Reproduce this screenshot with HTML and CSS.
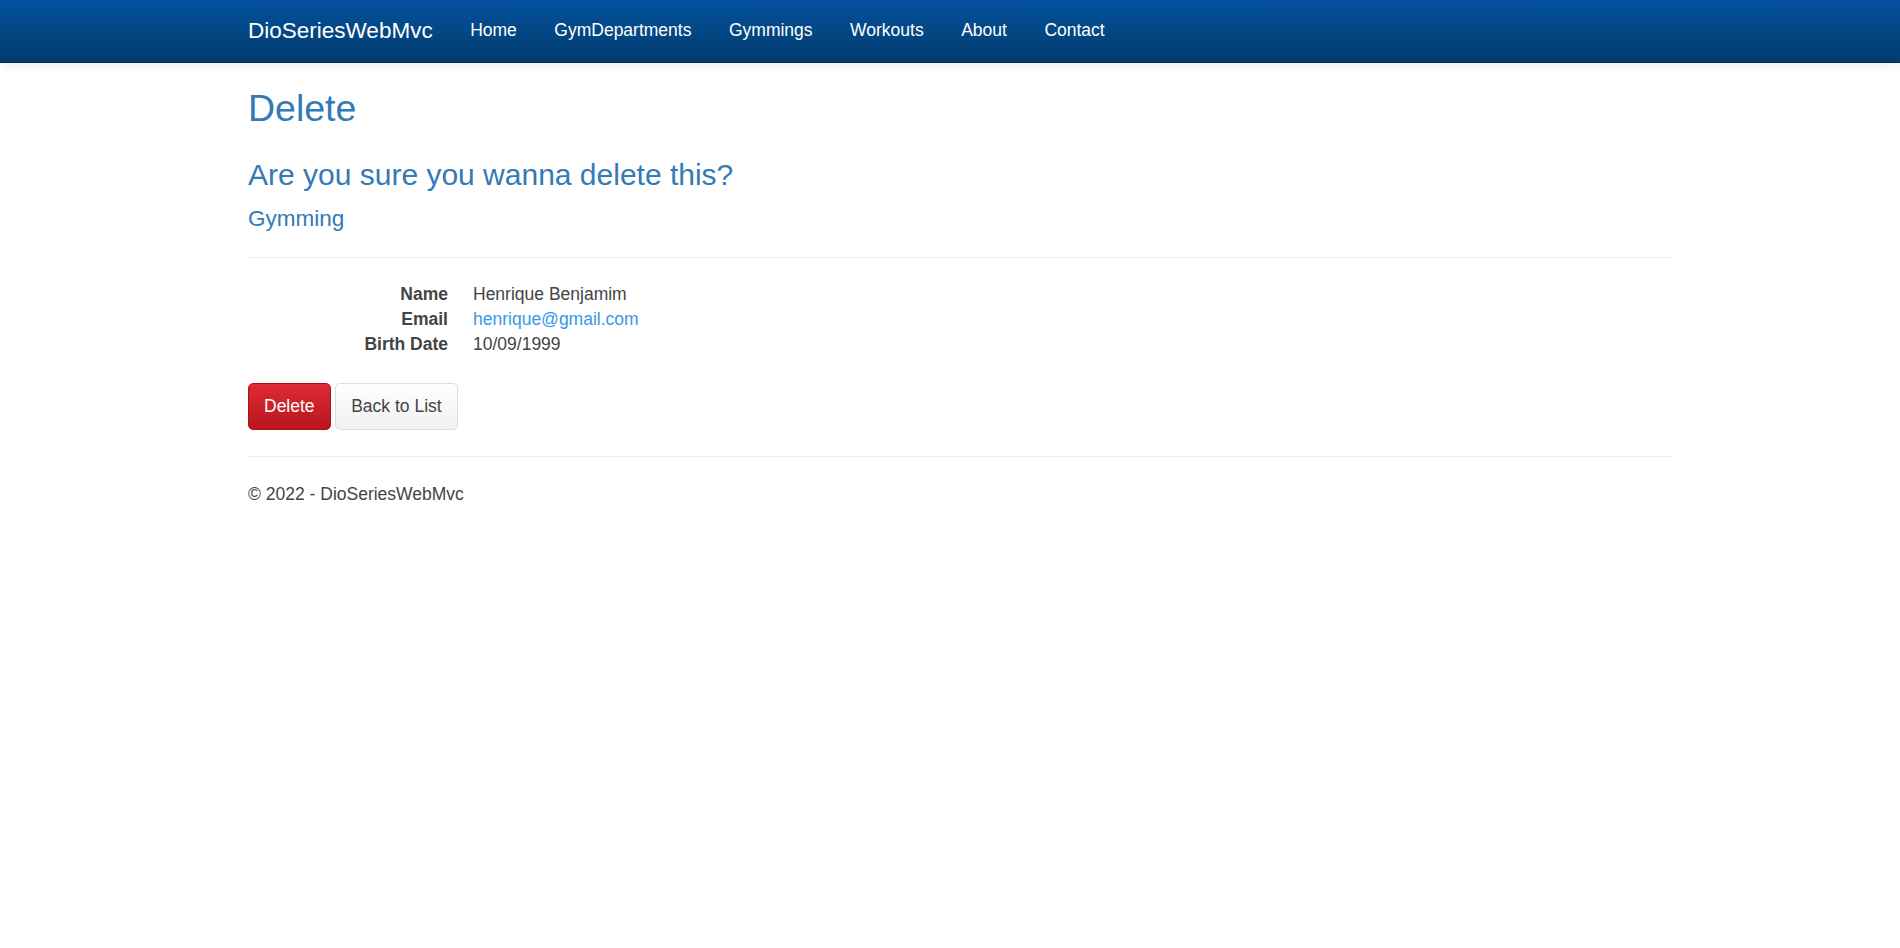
FILE: index.html
```html
<!DOCTYPE html>
<html lang="en">
<head>
<meta charset="utf-8">
<title>Delete - DioSeriesWebMvc</title>
<link rel="stylesheet" href="styles.css">
</head>
<body>
<header class="navbar">
  <div class="navbar-inner">
    <a class="brand" href="#">DioSeriesWebMvc</a>
    <ul class="nav">
      <li><a href="#">Home</a></li>
      <li><a href="#">GymDepartments</a></li>
      <li><a href="#">Gymmings</a></li>
      <li><a href="#">Workouts</a></li>
      <li><a href="#">About</a></li>
      <li><a href="#">Contact</a></li>
    </ul>
  </div>
</header>
<main class="container">
  <h2 class="page-title">Delete</h2>
  <h3 class="question">Are you sure you wanna delete this?</h3>
  <div class="entity-block">
    <h4 class="entity">Gymming</h4>
    <hr class="divider divider-top">
    <dl class="details">
      <dt>Name</dt>
      <dd>Henrique Benjamim</dd>
      <dt>Email</dt>
      <dd><a class="mail" href="#">henrique@gmail.com</a></dd>
      <dt>Birth Date</dt>
      <dd>10/09/1999</dd>
    </dl>
  </div>
  <form class="actions">
    <button type="button" class="btn btn-danger">Delete</button>
    <a class="btn btn-default" href="#">Back to List</a>
  </form>
  <hr class="divider divider-bottom">
  <footer class="footer">
    <p>&copy; 2022 - DioSeriesWebMvc</p>
  </footer>
</main>
</body>
</html>
```
FILE: styles.css
```css
* {
  box-sizing: border-box;
}

html, body {
  margin: 0;
  padding: 0;
  background: #ffffff;
}

body {
  font-family: "Liberation Sans", Arial, Helvetica, sans-serif;
  font-size: 17.5px;
  line-height: 25px;
  color: #444444;
}

a {
  text-decoration: none;
}

/* ---------- navbar ---------- */
.navbar {
  height: 62.5px;
  background: linear-gradient(to bottom, #04519f 0%, #03457f 60%, #033a72 100%);
  border-bottom: 1.5px solid #03295a;
  box-shadow: 0 3px 10px rgba(0, 0, 0, 0.07);
}

.navbar-inner {
  display: flex;
  align-items: flex-start;
  margin-left: 229.25px;
}

.brand {
  display: block;
  padding: 17.5px 18.75px 20px;
  font-size: 22.5px;
  line-height: 25px;
  color: #ffffff;
}

.nav {
  display: flex;
  list-style: none;
  margin: 0;
  padding: 0;
}

.nav a {
  display: block;
  padding: 17.5px 18.75px 20px;
  font-size: 17.5px;
  line-height: 25px;
  color: #ffffff;
}

/* ---------- content ---------- */
.container {
  width: 1425px;
  margin-left: 248px;
}

.page-title,
.question,
.entity {
  font-weight: 400;
  color: #337ab7;
  margin-bottom: 0;
}

.page-title {
  font-size: 37.5px;
  line-height: 41.25px;
  margin-top: 25.6px;
}

.question {
  font-size: 30px;
  line-height: 33px;
  margin-top: 28.9px;
}

.entity {
  font-size: 22.5px;
  line-height: 24.75px;
  margin-top: 15.3px;
}

.divider {
  height: 0;
  border: 0;
  border-top: 1px solid #eeeeee;
  margin-bottom: 0;
}

.divider-top {
  margin-top: 25.8px;
}

.details {
  display: grid;
  grid-template-columns: 200px 1fr;
  column-gap: 25px;
  margin: 24.3px 0 0 0;
}

.details dt {
  font-weight: 700;
  text-align: right;
  white-space: nowrap;
}

.details dd {
  margin: 0;
}

.mail {
  color: #3a98e4;
}

.actions {
  display: flex;
  gap: 4.6px;
  margin: 25.7px 0 0 0;
}

.btn {
  display: inline-block;
  padding: 10px 15px;
  font-family: inherit;
  font-size: 17.5px;
  line-height: 25px;
  border-radius: 5px;
  border: 1px solid transparent;
  cursor: pointer;
}

.btn-danger {
  color: #ffffff;
  background: linear-gradient(to bottom, #de2a35 0%, #b8161f 100%);
  border-color: #a8131b;
}

.btn-default {
  color: #444444;
  background: linear-gradient(to bottom, #ffffff 0%, #f1f1f1 100%);
  border-color: #dddddd;
}

.divider-bottom {
  margin-top: 25.5px;
}

.footer p {
  margin: 25.8px 0 12.5px 0;
}
```
